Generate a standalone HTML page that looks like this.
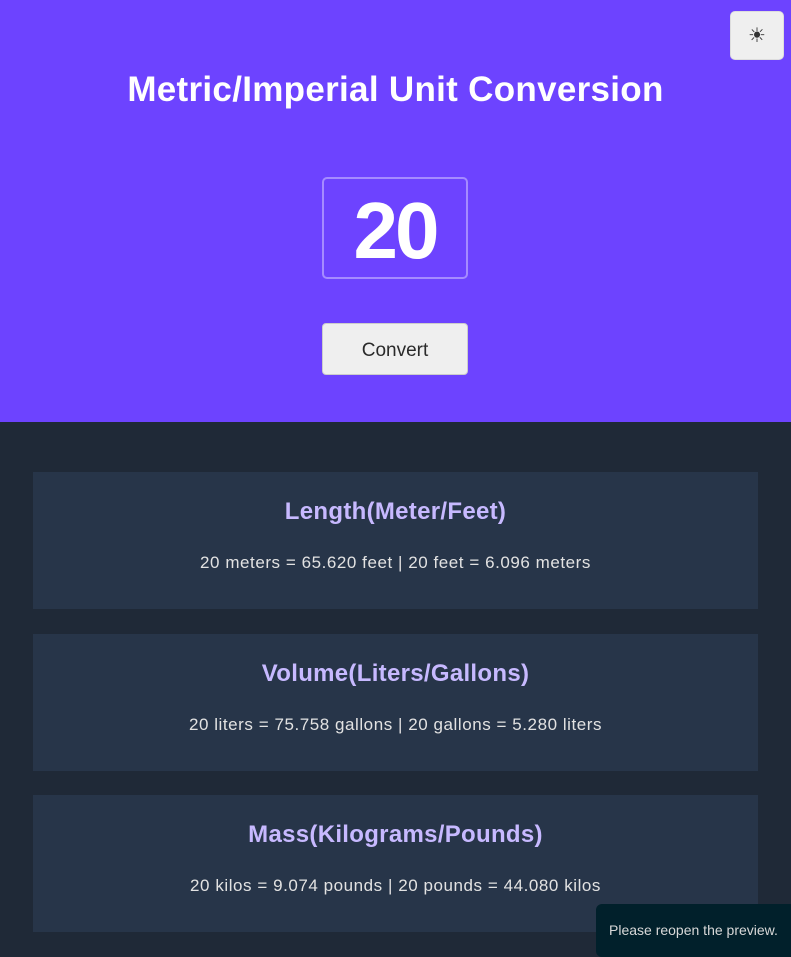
<!DOCTYPE html>
<html><head><style>
body{margin:0;width:791px;height:957px;overflow:hidden;background:#1f2937;font-family:"Liberation Sans",sans-serif;position:relative}
.top{position:absolute;left:0;top:0;width:791px;height:422px;background:#6d43ff}
h1{position:absolute;top:70px;left:0;width:791px;text-align:center;margin:0;color:#fff;font-size:35px;font-weight:bold;letter-spacing:0.3px}
.theme{position:absolute;left:730px;top:11px;width:54px;height:49px;background:#efefef;border-radius:5px;border:1px solid #ddd;box-sizing:border-box;text-align:center;line-height:48px;font-size:20px;color:#333}
.num{position:absolute;left:322px;top:177px;width:146px;height:102px;border:2px solid #a58bff;border-radius:5px;box-sizing:border-box;color:#fff;font-size:80px;font-weight:bold;text-align:center;line-height:104px;letter-spacing:-3px}
.btn{position:absolute;left:322px;top:323px;width:146px;height:52px;background:#efefef;border-radius:4px;border:1px solid #ccc;box-sizing:border-box;text-align:center;line-height:54px;font-size:19px;color:#2a2a2a}
.card{position:absolute;left:33px;width:725px;height:137px;background:#273549;text-align:center}
.card h2{margin:0;position:absolute;top:26px;width:100%;font-size:24px;color:#c7b9ff;font-weight:bold;letter-spacing:0.3px}
.card p{margin:0;position:absolute;top:81px;width:100%;font-size:17px;color:#e2e2e2;letter-spacing:0.55px}
.toast{position:absolute;left:596px;top:904px;width:200px;height:53px;background:#01202b;border-radius:6px;color:#d8d8d8;font-size:14px;line-height:53px;padding-left:13px;box-sizing:border-box}
</style></head><body>
<div class="top"></div>
<div class="theme">☀</div>
<h1>Metric/Imperial Unit Conversion</h1>
<div class="num">20</div>
<div class="btn">Convert</div>
<div class="card" style="top:472px"><h2>Length(Meter/Feet)</h2><p>20 meters = 65.620 feet | 20 feet = 6.096 meters</p></div>
<div class="card" style="top:634px"><h2>Volume(Liters/Gallons)</h2><p>20 liters = 75.758 gallons | 20 gallons = 5.280 liters</p></div>
<div class="card" style="top:795px"><h2>Mass(Kilograms/Pounds)</h2><p>20 kilos = 9.074 pounds | 20 pounds = 44.080 kilos</p></div>
<div class="toast">Please reopen the preview.</div>
</body></html>
